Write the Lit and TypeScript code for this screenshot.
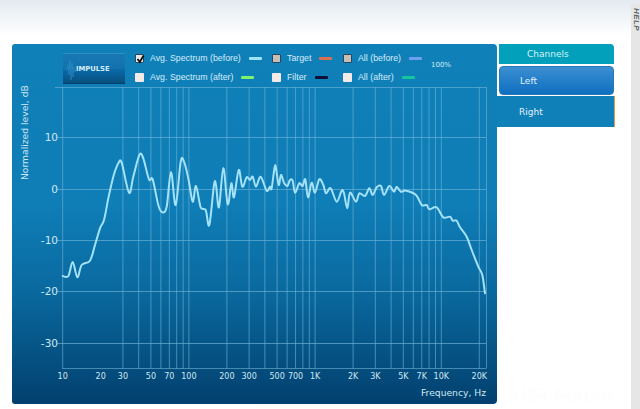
import { LitElement, html, css, svg } from "lit";
import { customElement } from "lit/decorators.js";

const A: [number, number][] = [[38,468],[55,468],[68,426],[82,472],[95,435],[120,422],[135,375],[150,325],[162,300],[175,235],[190,170],[205,130],[215,128],[237,218],[250,170],[268,105],[280,115],[297,178],[308,178],[325,255],[337,277],[350,260],[363,157],[377,255],[392,125],[402,125],[415,175],[428,245],[438,198],[452,262],[467,270],[478,315],[492,195],[498,195],[507,262],[520,145],[533,253],[544,190],[552,232],[566,150],[577,200],[590,172],[600,180],[608,170],[618,200],[632,170],[650,212]];
const B: [number, number][] = [[0,110],[5,115],[14,50],[18,55],[26,105],[33,75],[42,98],[52,108],[60,90],[68,92],[75,128],[88,100],[98,108],[106,88],[114,142],[125,98],[135,128],[148,88],[160,105],[168,130],[182,115],[200,155],[215,122],[222,130],[232,175],[240,128],[258,155],[268,130],[285,138],[298,115],[308,135],[320,112],[333,108],[342,135],[358,108],[372,125],[380,110],[392,125],[408,122],[438,135],[455,165],[470,165],[478,178],[500,172],[520,202],[540,200],[548,212],[560,212],[570,232],[590,260],[605,300],[625,350],[637,375],[645,430]];

// SVG origin sits at page (12, 85)
const OX = 12, OY = 85;
const pts: [number, number][] = [
  ...A.map(([x, y]) => [50 + x / 3 - OX, 120 + y / 3 - OY] as [number, number]),
  ...B.map(([x, y]) => [270 + x / 3 - OX, 150 + y / 3 - OY] as [number, number]),
];

function smooth(p: [number, number][]): string {
  let d = `M${p[0][0].toFixed(1)} ${p[0][1].toFixed(1)}`;
  for (let i = 0; i < p.length - 1; i++) {
    const a = p[Math.max(i - 1, 0)], b = p[i], c = p[i + 1], e = p[Math.min(i + 2, p.length - 1)];
    const k = 1 / 6;
    d += `C${(b[0] + (c[0] - a[0]) * k).toFixed(1)} ${(b[1] + (c[1] - a[1]) * k).toFixed(1)} ${(c[0] - (e[0] - b[0]) * k).toFixed(1)} ${(c[1] - (e[1] - b[1]) * k).toFixed(1)} ${c[0].toFixed(1)} ${c[1].toFixed(1)}`;
  }
  return d;
}

const xOf = (f: number) => 62.7 + 126.2 * Math.log10(f / 10) - OX;
const freqs = [10,30,40,50,60,70,80,90,100,200,300,400,500,600,700,800,900,1000,2000,3000,4000,5000,6000,7000,8000,9000,10000,20000];
const xLabels: [string, number][] = [["10",10],["20",20],["30",30],["50",50],["70",70],["100",100],["200",200],["300",300],["500",500],["700",700],["1K",1000],["2K",2000],["3K",3000],["5K",5000],["7K",7000],["10K",10000],["20K",20000]];
const yLines: [string, number][] = [["10",137],["0",189],["-10",240],["-20",291],["-30",343]];

type Item = { label: string; state: string; color: string };
const legend: Item[] = [
  { label: "Avg. Spectrum (before)", state: "checked", color: "#9fe3f7" },
  { label: "Target", state: "grey", color: "#d9704f" },
  { label: "All (before)", state: "grey", color: "#6f9ff2" },
  { label: "Avg. Spectrum (after)", state: "", color: "#7df26a" },
  { label: "Filter", state: "", color: "#0c1038" },
  { label: "All (after)", state: "", color: "#12c79c" },
];

@customElement("app-root")
export class AppRoot extends LitElement {
  static styles = css`
    :host { display: block; }
    .page {
      box-sizing: border-box; width: 640px; height: 409px; overflow: hidden; position: relative;
      display: flex; align-items: flex-start; padding: 4px 0 0 12px;
      background: linear-gradient(#e3eaf0 0, #f0f4f7 16px, #ffffff 36px) no-repeat;
      font-family: "DejaVu Sans", Verdana, sans-serif;
    }
    .panel {
      width: 485px; height: 360px; margin-top: 40px; flex: none; box-sizing: border-box;
      border-radius: 3px 4px 4px 3px; color: #d8eef8;
      background: linear-gradient(#1080b9 0, #0f7db6 45%, #0a6aa0 68%, #02406e 100%);
    }
    .toolbar { height: 41px; box-sizing: border-box; padding: 9px 0 0 51px; display: flex; align-items: flex-start; }
    .impulse {
      width: 62px; height: 31px; box-sizing: border-box; flex: none; margin-right: 10px;
      display: flex; align-items: center; padding-left: 13px; position: relative;
      background: linear-gradient(#1878b4 0, #1272ae 50%, #0a68a8 55%, #07507f 100%);
      border-bottom: 1px solid #063f6e; border-top: 1px solid #2d8fc4;
      font-size: 6.8px; font-weight: bold; color: #d5edf8;
    }
    .impulse svg { position: absolute; left: 1px; top: 2px; }
    .legend { display: grid; grid-template-columns: 137px 71px 80px; grid-auto-rows: 19px; margin-top: -4.5px; }
    .item { display: flex; align-items: center; font: 8.8px "Liberation Sans", Arial, sans-serif; white-space: nowrap; color: #d5edf8; height: 19px; }
    .cb {
      width: 9px; height: 9px; margin-right: 6px; flex: none; box-sizing: border-box; position: relative;
      background: #f4e9e6; border-radius: 1px;
    }
    .cb.grey { background: #c9bdb6; border: 1px solid #1e4a63; }
    .cb.checked { background: #e8e4e2; border: 1px solid #1e4a63; }
    .cb svg { position: absolute; left: -1px; top: -2px; }
    .swatch { width: 13px; height: 3px; margin-left: 8px; border-radius: 1px; flex: none; }
    .pct { font-size: 7px; margin: 8px 0 0 8px; color: #d5edf8; }
    .chart { display: block; }
    .chart text { font-family: "DejaVu Sans", Verdana, sans-serif; fill: #cfe8f4; }
    .tabs { width: 116px; margin: 40px 0 0 2px; flex: none; display: flex; flex-direction: column; color: #e2f2fa; font-size: 9px; }
    .tab-head {
      height: 20px; background: #03a0bc; border-radius: 0 4px 0 0; display: flex; align-items: center;
      padding-left: 28px; width: 115px; box-sizing: border-box; color: #d6f3f8;
    }
    .tab-left {
      height: 29px; width: 115px; margin-top: 2px; box-sizing: border-box; padding-left: 20px; display: flex; align-items: center;
      background: linear-gradient(#3c8fd2, #0e6fc0); border: 1px solid #2a78b4; border-radius: 4px;
    }
    .tab-right {
      height: 31px; margin: 1px 0 0 -2px; width: 118px; box-sizing: border-box; padding-left: 22px; display: flex; align-items: center;
      background: #1080b9; border-right: 1px solid #e29a4a;
    }
    .rail { width: 9px; height: 405px; margin-left: auto; flex: none; background: #e6e6e6; position: relative; }
    .help { position: absolute; left: 1px; top: 4px; writing-mode: vertical-rl; font: italic bold 8px "Liberation Sans", sans-serif; color: #5a5f63; letter-spacing: 0.4px; }
    .mark { position: absolute; left: 512px; top: 384px; font: 20px "Liberation Sans", sans-serif; color: #fdfdfd; white-space: nowrap; }
  `;

  render() {
    const d = smooth(pts);
    const top = 87 - OY, bot = 368.5 - OY, line = "#6fb6d8";
    return html`<div class="page">
      <div class="panel">
        <div class="toolbar">
          <div class="impulse">
            <svg width="16" height="27" viewBox="0 0 16 27"><path d="M1 14H3L4 9 5 19 6 4 7 24 8 7 9 21 10 11 11 16 12 13 14 14" fill="none" stroke="#3a9ccc" stroke-opacity=".7" stroke-width=".6"/></svg>
            IMPULSE
          </div>
          <div class="legend">
            ${legend.map((i) => html`<div class="item">
              <span class="cb ${i.state}">${i.state === "checked" ? html`<svg width="11" height="11" viewBox="0 0 11 11"><path d="M2.5 6 4.8 9 8.6 2.5" fill="none" stroke="#0a0a0a" stroke-width="1.7"/></svg>` : ""}</span>
              ${i.label}<span class="swatch" style="background:${i.color}"></span></div>`)}
          </div>
          <div class="pct">100%</div>
        </div>
        <svg class="chart" width="485" height="319" viewBox="0 0 485 319">
          ${freqs.map((f) => svg`<line x1=${xOf(f)} x2=${xOf(f)} y1=${top} y2=${bot} stroke=${line} stroke-opacity=".6" stroke-width="1"/>`)}
          <line x1=${486.5 - OX} x2=${486.5 - OX} y1=${top} y2=${bot} stroke=${line} stroke-opacity=".6"/>
          <line x1=${55 - OX} x2=${486 - OX} y1=${top + 0.5} y2=${top + 0.5} stroke=${line} stroke-opacity=".6"/>
          <line x1=${62 - OX} x2=${486 - OX} y1=${bot} y2=${bot} stroke=${line} stroke-opacity=".6"/>
          ${yLines.map(([t, y]) => svg`
            <line x1=${57 - OX} x2=${486 - OX} y1=${y + 0.5 - OY} y2=${y + 0.5 - OY} stroke=${line} stroke-opacity=".65"/>
            <text x=${58 - OX} y=${y + 4 - OY} text-anchor="end" font-size="10.5">${t}</text>`)}
          ${xLabels.map(([t, f]) => svg`<text x=${xOf(f)} y=${379 - OY} text-anchor="middle" font-size="8">${t}</text>`)}
          <text x=${486 - OX} y=${396 - OY} text-anchor="end" font-size="9.2">Frequency, Hz</text>
          <text transform="translate(${28 - OX} ${180 - OY}) rotate(-90)" font-size="9.2">Normalized level, dB</text>
          <path d=${d} fill="none" stroke="#a3e2f8" stroke-width="2" stroke-linejoin="round" stroke-linecap="round"/>
        </svg>
      </div>
      <div class="tabs">
        <div class="tab-head">Channels</div>
        <div class="tab-left">Left</div>
        <div class="tab-right">Right</div>
      </div>
      <div class="rail"><div class="help">HELP</div></div>
      <div class="mark">HiFi-Forum</div>
    </div>`;
  }
}
